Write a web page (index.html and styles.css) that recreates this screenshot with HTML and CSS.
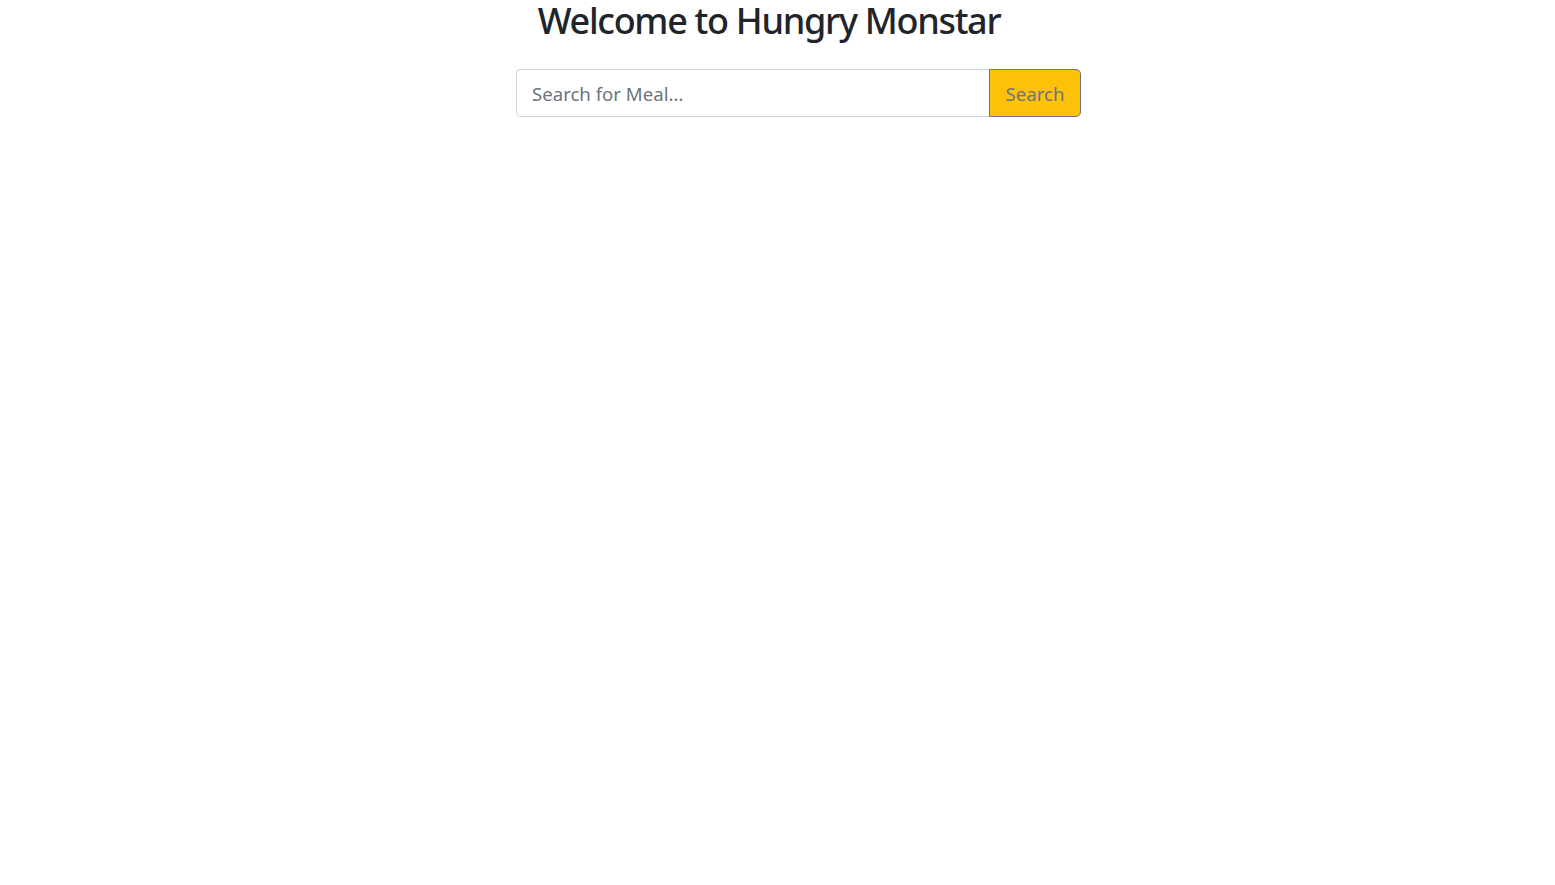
FILE: index.html
```html
<!DOCTYPE html>
<html lang="en">
<head>
<meta charset="utf-8">
<title>Hungry Monstar</title>
<link rel="stylesheet" href="styles.css">
</head>
<body>
<div class="page">
  <h1 class="title">Welcome to Hungry Monstar</h1>
  <div class="search-row">
    <div class="input-group">
      <input class="search-input" type="text" placeholder="Search for Meal...">
      <button class="search-btn" type="button">Search</button>
    </div>
  </div>
</div>
</body>
</html>
```

FILE: styles.css
```css
html, body {
  margin: 0;
  padding: 0;
  background: #fff;
}
body {
  font-family: "Noto Sans", "Open Sans", "Liberation Sans", sans-serif;
  color: #212529;
}
.page {
  width: 1538px;
  display: flex;
  flex-direction: column;
  align-items: center;
}
.title {
  margin: 0;
  font-size: 36px;
  font-weight: 500;
  line-height: 41px;
  text-align: center;
  letter-spacing: -1.3px;
}
.search-row {
  width: 100%;
  display: flex;
  padding-left: 516px;
  margin-top: 28px;
  box-sizing: border-box;
}
.input-group {
  display: flex;
  width: 565px;
  height: 48px;
}
.search-input {
  flex: 1;
  min-width: 0;
  box-sizing: border-box;
  height: 48px;
  padding: 1px 15px 0;
  font-family: inherit;
  font-size: 18.6px;
  color: #495057;
  border: 1px solid #ced4da;
  border-right: none;
  border-radius: 5px 0 0 5px;
  outline: none;
}
.search-input::placeholder {
  color: #6c757d;
}
.search-btn {
  box-sizing: border-box;
  width: 92px;
  height: 48px;
  padding: 1px 0 0;
  font-family: inherit;
  font-size: 18.6px;
  color: #6c757d;
  background: #ffc107;
  border: 1px solid #6c757d;
  border-radius: 0 5px 5px 0;
  cursor: pointer;
}
```
